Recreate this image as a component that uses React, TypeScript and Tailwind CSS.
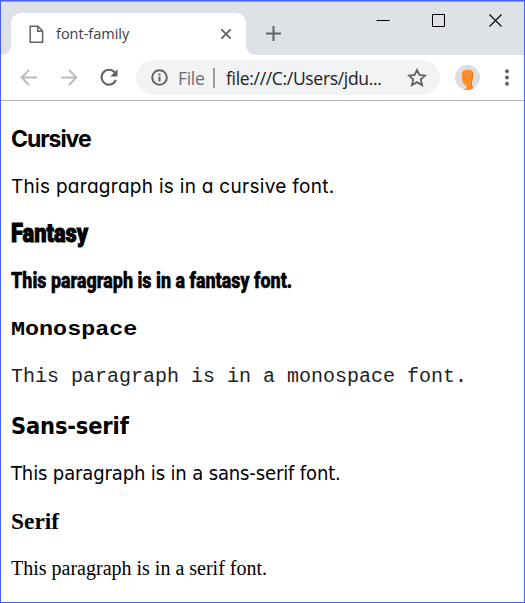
import React from "react";

const ui = "font-['Open_Sans','Noto_Sans',sans-serif]";

function TabStrip() {
  return (
    <header className="flex h-[53px] shrink-0 items-start bg-[#dee1e6]">
      <div className="flex h-[53px] w-[10px] items-end">
        <svg width="10" height="10" viewBox="0 0 10 10"><path d="M10 0v10H0C6 10 10 6 10 0Z" fill="#fff" /></svg>
      </div>
      <div className="mt-[11px] flex h-[42px] w-[235px] items-center rounded-t-[10px] bg-white pr-[14px] pl-[18px]">
        <svg width="15" height="19" viewBox="0 0 15 19" fill="none" stroke="#5f6368" strokeWidth="1.5">
          <path d="M1.2 1.2H9l4.6 4.8v11.3H1.2Z" /><path d="M8.8 1.2v5h4.8" />
        </svg>
        <span className={`${ui} ml-3 flex-1 text-[14.5px] leading-5 whitespace-nowrap text-[#3c4043]`}>font-family</span>
        <svg width="12" height="12" viewBox="0 0 12 12" stroke="#5f6368" strokeWidth="1.9"><path d="m1.3 1.3 9.4 9.4m0-9.4-9.4 9.4" /></svg>
      </div>
      <div className="flex h-[53px] w-[10px] items-end">
        <svg width="10" height="10" viewBox="0 0 10 10"><path d="M0 0v10h10C4 10 0 6 0 0Z" fill="#fff" /></svg>
      </div>
      <svg className="mt-[23px] ml-[9px]" width="17" height="17" viewBox="0 0 17 17" stroke="#5f6368" strokeWidth="2"><path d="M8.5 1v15M1 8.5h15" /></svg>
      <div className="mt-[12px] ml-[94px] flex">
        <svg width="14" height="14" viewBox="0 0 14 14" stroke="#000"><path d="M.5 6.5h13" /></svg>
        <svg className="ml-[42px]" width="14" height="14" viewBox="0 0 14 14" fill="none" stroke="#000"><path d="M.5.5h12v12H.5z" /></svg>
        <svg className="ml-[43px]" width="14" height="14" viewBox="0 0 14 14" stroke="#000" strokeWidth="1.1"><path d="m.5.5 12 12m0-12-12 12" /></svg>
      </div>
    </header>
  );
}

function Toolbar() {
  return (
    <div className="flex h-[46px] shrink-0 items-center border-b border-[#b2b4b6] pl-[19px]">
      <svg width="18" height="18" viewBox="0 0 18 18" fill="none" stroke="#babcbe" strokeWidth="1.9"><path d="M17 8.5H2M9 1 1.6 8.5 9 16" /></svg>
      <svg className="ml-[22px]" width="18" height="18" viewBox="0 0 18 18" fill="none" stroke="#babcbe" strokeWidth="1.9"><path d="M1 8.5h15M9 1l7.4 7.5L9 16" /></svg>
      <svg className="ml-[22px]" width="18" height="18" viewBox="0 0 18 18"><path d="M14.5 3.3A7.4 7.4 0 1 0 15.8 11" fill="none" stroke="#5f6368" strokeWidth="2.1" /><path d="M17.5.3v7.2H10.3Z" fill="#5f6368" /></svg>
      <div className={`${ui} ml-[18px] flex h-[35px] w-[304px] items-center rounded-full bg-[#f1f3f4] pl-[15px] text-[17.5px] leading-6 whitespace-nowrap`}>
        <svg width="17" height="17" viewBox="0 0 17 17" fill="none" stroke="#5f6368" strokeWidth="2"><circle cx="8.5" cy="8.5" r="7.3" /><path d="M8.5 7.6v4.8M8.5 4.5v1.9" /></svg>
        <span className="ml-[10px] w-[27px] tracking-[-0.3px] text-[#6b6f74]">File</span>
        <span className="ml-[8px] h-[20px] w-[2px] bg-[#9b9ea2]" />
        <span className="ml-[11px] w-[157px] tracking-[-0.32px] text-[#202124]">file:///C:/Users/jdu...</span>
        <svg className="ml-[24px]" width="20" height="20" viewBox="0 0 20 20" fill="none" stroke="#5f6368" strokeWidth="1.8"><path d="m10 2 2.4 5 5.7.6-4.3 3.8 1.3 5.7-5.1-3-5.1 3 1.3-5.7L1.9 7.6 7.6 7Z" /></svg>
      </div>
      <svg className="ml-[15px]" width="25" height="25" viewBox="0 0 25 25">
        <defs><clipPath id="avatar"><circle cx="12.5" cy="12.5" r="12.5" /></clipPath></defs>
        <g clipPath="url(#avatar)"><path d="M0 0h25v25H0z" fill="#dedede" /><path d="M6.8 9.5C6.7 6.3 8.6 4.8 12.8 4.8c3.9 0 5.9 1.8 5.7 5.2-.2 3.4-1.5 5.2-1.5 8 0 2.8.5 4.6 1.4 7H7.8l3.8-2v-2.4C8.5 20.6 7 15.5 6.8 9.5Z" fill="#ff8b2b" /><path d="M17.6 7.5c.8 4-1.2 6-1.2 10.5 0 2 .4 3.6 1 5" fill="none" stroke="#d97320" strokeWidth=".8" /></g>
      </svg>
      <svg className="ml-[25px]" width="4" height="17" viewBox="0 0 4 17" fill="#5f6368"><circle cx="2" cy="2.2" r="2" /><circle cx="2" cy="8.5" r="2" /><circle cx="2" cy="14.8" r="2" /></svg>
    </div>
  );
}

export default function App() {
  return (
    <div className="flex h-[603px] w-[525px] flex-col overflow-hidden border border-[#4361f5] bg-white text-black">
      <div className="h-px shrink-0 bg-[#80a4f4]" />
      <TabStrip />
      <Toolbar />
      <main className="flex flex-col items-start pl-[10px] text-[20px] leading-[30px] whitespace-nowrap">
        <section className="mt-[23px] h-[94px] font-['Inter',sans-serif] [font-feature-settings:'cv11']">
          <h3 className="mb-[18px] text-[23px] font-bold tracking-[-1.05px]">Cursive</h3>
          <p className="text-[19px] tracking-[0.29px]">This paragraph is in a cursive font.</p>
        </section>
        <section className="h-[96px] font-['Roboto',sans-serif] font-black">
          <h3 className="mb-[18px] w-max origin-left scale-x-[0.84] text-[26px] [-webkit-text-stroke:1px_black]">Fantasy</h3>
          <p className="w-max origin-left scale-x-[0.832] text-[21.5px] [-webkit-text-stroke:0.4px_black]">This paragraph is in a fantasy font.</p>
        </section>
        <section className="h-[97px] font-['Liberation_Mono',monospace]">
          <h3 className="mb-[18px] w-max origin-[0_70%] scale-y-[0.9] text-[23.4px] font-bold">Monospace</h3>
          <p className="text-[#222]">This paragraph is in a monospace font.</p>
        </section>
        <section className="h-[95px] font-['DejaVu_Sans_Condensed','DejaVu_Sans',sans-serif]">
          <h3 className="mb-[17px] text-[23.4px] font-bold tracking-[-0.15px]">Sans-serif</h3>
          <p className="tracking-[-0.13px]">This paragraph is in a sans-serif font.</p>
        </section>
        <section className="font-['Liberation_Serif',serif]">
          <h3 className="mb-[17px] text-[23.4px] font-bold">Serif</h3>
          <p>This paragraph is in a serif font.</p>
        </section>
      </main>
    </div>
  );
}
